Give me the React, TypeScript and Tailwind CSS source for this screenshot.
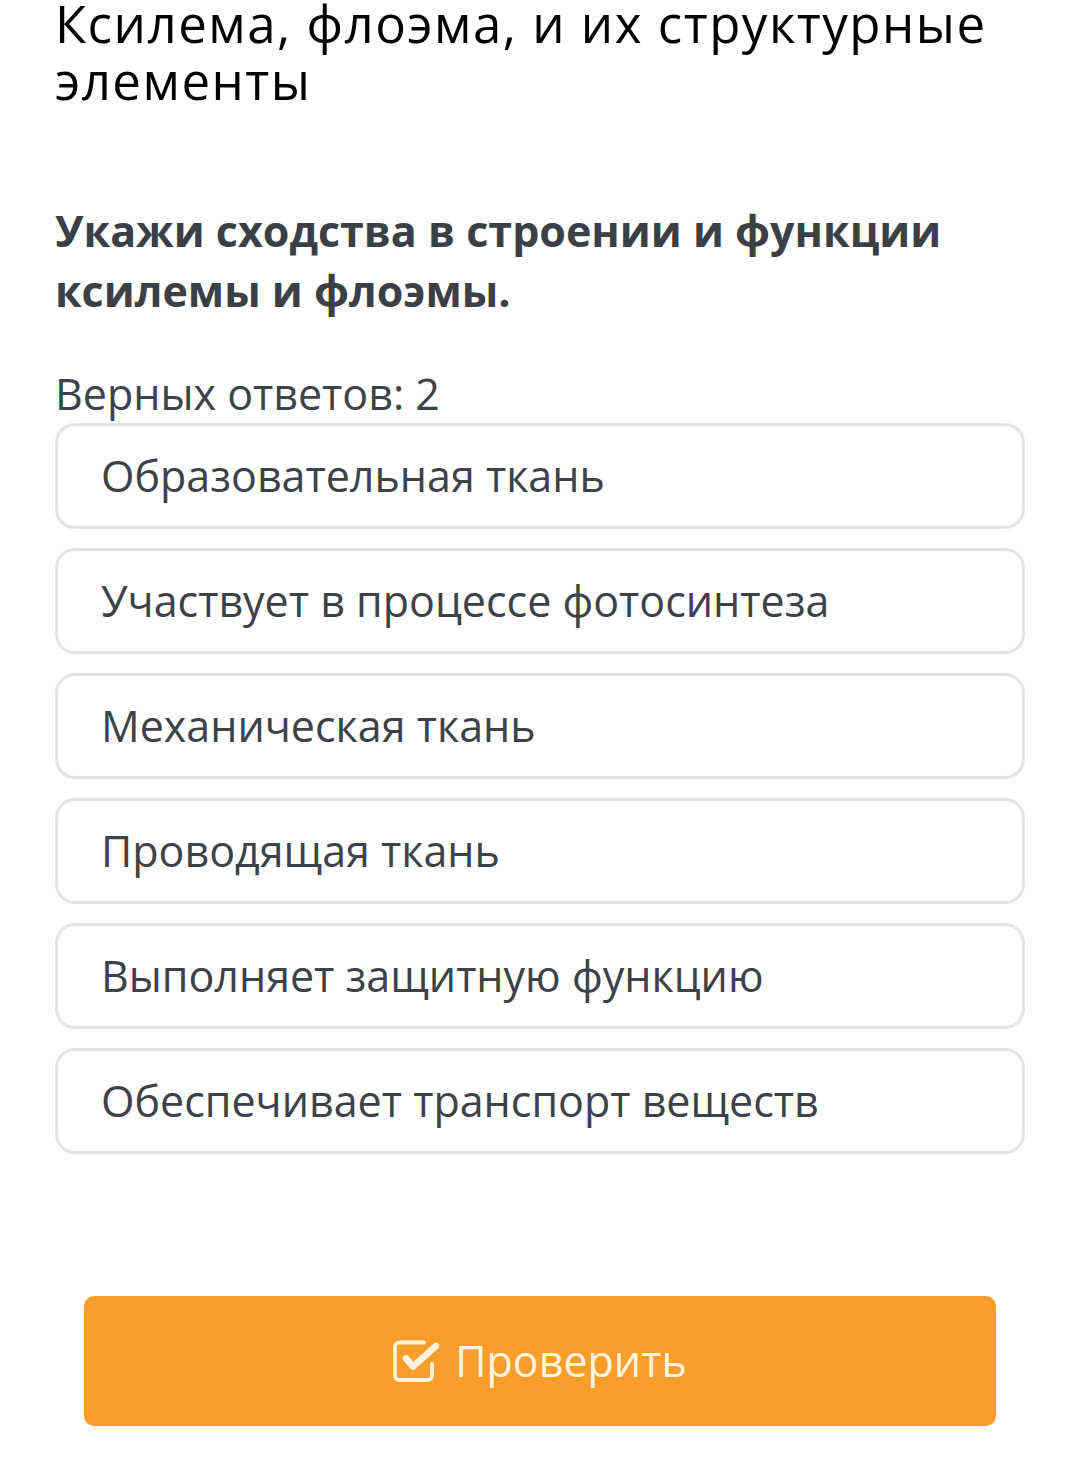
const OPTIONS = [
  'Образовательная ткань',
  'Участвует в процессе фотосинтеза',
  'Механическая ткань',
  'Проводящая ткань',
  'Выполняет защитную функцию',
  'Обеспечивает транспорт веществ',
]

function CheckSquareIcon() {
  // квадрат с галочкой, выходящей за правый верхний угол
  return (
    <svg viewBox="8 12 46 44" className="w-[46px] h-[44px]" fill="none" stroke="currentColor" strokeLinecap="round" strokeLinejoin="round">
      <path d="M39 15.5 H14.5 a4.5 4.5 0 0 0 -4.5 4.5 V48.5 a4.5 4.5 0 0 0 4.5 4.5 H42.5 a4.5 4.5 0 0 0 4.5 -4.5 V37" strokeWidth={3.8} />
      <path d="M21 31.5 L28 39.5 L51 19" strokeWidth={6.5} />
    </svg>
  )
}

export default function App() {
  return (
    <div className="w-[1080px] h-[1458px] bg-white overflow-hidden font-['Open_Sans',sans-serif]">
      <div className="px-[55px]">
        {/* Заголовок */}
        <h1 className="text-[51px] leading-[57px] text-black mt-[-5px] tracking-[1.5px]">
          Ксилема, флоэма, и их структурные элементы
        </h1>

        {/* Вопрос */}
        <p className="mt-[92px] text-[43px] leading-[60px] font-bold text-[#3b4047]">
          Укажи сходства в строении и функции ксилемы и флоэмы.
        </p>

        <p className="mt-[47px] text-[43px] leading-[52px] text-[#3e4249]">Верных ответов: 2</p>

        <div className="mt-[3px] flex flex-col gap-[19px]">
          {OPTIONS.map(o => (
            <div key={o} className="h-[106px] rounded-[20px] border-[3px] border-[#e2e5e7] flex items-center pl-[43px]">
              <span className="text-[43px] text-[#3d4148]">{o}</span>
            </div>
          ))}
        </div>
      </div>

      <div className="px-[84px] mt-[142px]">
        <button className="w-full h-[130px] rounded-[10px] bg-[#f99d2b] flex items-center justify-center gap-[16px] text-[#fff4e0]">
          <CheckSquareIcon />
          <span className="text-[43px]">Проверить</span>
        </button>
      </div>
    </div>
  )
}
